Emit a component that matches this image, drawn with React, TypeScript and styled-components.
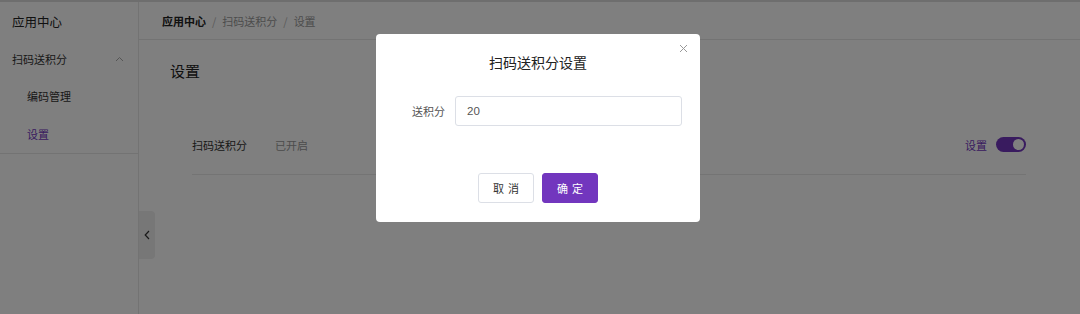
import React from "react";
import styled, { createGlobalStyle } from "styled-components";

const GlobalStyle = createGlobalStyle`
  body {
    margin: 0;
    font-family: "Noto Sans CJK SC", "Noto Sans", sans-serif;
    color: #333;
    background: #fff;
  }
`;

const purple = "#7236be";

const Page = styled.div`
  display: flex;
  height: 314px;
  box-sizing: border-box;
  border-top: 2px solid #dcdcdc;
  overflow: hidden;
`;

const Sidebar = styled.div`
  position: relative;
  width: 138px;
  flex-shrink: 0;
  border-right: 1px solid #e6e6e6;
`;

const SideTitle = styled.div`
  height: 38px;
  display: flex;
  align-items: center;
  padding-left: 12px;
  font-size: 12.5px;
  color: #222;
`;

const Menu = styled.div`
  border-bottom: 1px solid #e6e6e6;
`;

const MenuItem = styled.div<{ $sub?: boolean; $active?: boolean }>`
  height: 37.5px;
  display: flex;
  align-items: center;
  justify-content: space-between;
  padding-left: ${(p) => (p.$sub ? "27px" : "12px")};
  padding-right: 14px;
  font-size: 11px;
  color: ${(p) => (p.$active ? purple : "#333")};
`;

const CollapseTab = styled.div`
  position: absolute;
  right: -17px;
  top: 209px;
  width: 16px;
  height: 48px;
  background: #eeeeee;
  border-radius: 0 4px 4px 0;
  display: flex;
  align-items: center;
  justify-content: center;
`;

const Main = styled.div`
  flex: 1;
  display: flex;
  flex-direction: column;
`;

const Breadcrumb = styled.div`
  height: 37px;
  border-bottom: 1px solid #e6e6e6;
  display: flex;
  align-items: center;
  padding-left: 23px;
  font-size: 11px;
  color: #8a8a8a;
  gap: 6px;
`;

const Crumb = styled.span<{ $strong?: boolean }>`
  color: ${(p) => (p.$strong ? "#222" : "#999")};
  font-weight: ${(p) => (p.$strong ? 700 : 400)};
`;

const Sep = styled.span`
  color: #b5b5b5;
`;

const Content = styled.div`
  padding: 20px 54px 0 31px;
`;

const PageTitle = styled.div`
  font-size: 15px;
  color: #222;
  height: 22px;
  line-height: 22px;
`;

const SettingRow = styled.div`
  margin: 33px 0 0 22px;
  height: 60px;
  box-sizing: border-box;
  border-bottom: 1px solid #e8e8e8;
  display: flex;
  align-items: center;
  font-size: 11px;
`;

const RowLabel = styled.span`
  width: 83px;
  color: #333;
`;

const RowStatus = styled.span`
  color: #999;
  flex: 1;
`;

const RowAction = styled.span`
  display: flex;
  align-items: center;
  gap: 9px;
  color: ${purple};
`;

const Switch = styled.span`
  width: 30px;
  height: 15px;
  border-radius: 8px;
  background: ${purple};
  display: flex;
  align-items: center;
  justify-content: flex-end;
  padding: 0 2px;
  box-sizing: border-box;
`;

const Knob = styled.span`
  width: 11px;
  height: 11px;
  border-radius: 50%;
  background: #fff;
`;

const Mask = styled.div`
  position: fixed;
  inset: 0;
  background: rgba(0, 0, 0, 0.5);
  display: flex;
  justify-content: center;
  align-items: flex-start;
  padding: 34px 4px 0 0;
`;

const Modal = styled.div`
  position: relative;
  width: 324px;
  height: 188px;
  background: #fff;
  border-radius: 4px;
  box-sizing: border-box;
  display: flex;
  flex-direction: column;
`;

const ModalTitle = styled.div`
  text-align: center;
  font-size: 14px;
  color: #222;
  margin-top: 17px;
  height: 22px;
  line-height: 22px;
`;

const Close = styled.div`
  position: absolute;
  top: 8px;
  right: 11px;
  width: 12px;
  height: 12px;
  display: flex;
  align-items: center;
  justify-content: center;
`;

const FormRow = styled.div`
  display: flex;
  align-items: center;
  margin-top: 23px;
  padding-right: 18px;
`;

const Label = styled.label`
  width: 69px;
  text-align: right;
  font-size: 11px;
  color: #555;
  margin-right: 10px;
`;

const Input = styled.div`
  flex: 1;
  height: 30px;
  box-sizing: border-box;
  border: 1px solid #dcdfe6;
  border-radius: 3px;
  display: flex;
  align-items: center;
  padding-left: 11px;
  font-family: "Liberation Sans", sans-serif;
  font-size: 11.5px;
  color: #555;
`;

const Footer = styled.div`
  display: flex;
  justify-content: center;
  gap: 8px;
  margin-top: 47px;
`;

const Button = styled.button<{ $primary?: boolean }>`
  width: 56px;
  height: 30px;
  box-sizing: border-box;
  border-radius: 3px;
  border: 1px solid ${(p) => (p.$primary ? purple : "#dcdfe6")};
  background: ${(p) => (p.$primary ? purple : "#fff")};
  color: ${(p) => (p.$primary ? "#fff" : "#333")};
  font-family: "Noto Sans CJK SC", sans-serif;
  font-size: 11px;
  letter-spacing: 4px;
  padding: 0 0 0 4px;
`;

export default function App() {
  return (
    <>
      <GlobalStyle />
      <Page>
        <Sidebar>
          <SideTitle>应用中心</SideTitle>
          <Menu>
            <MenuItem>
              扫码送积分
              <svg width="9" height="6" viewBox="0 0 9 6">
                <path d="M1 5 L4.5 1.5 L8 5" fill="none" stroke="#aaa" strokeWidth="1" />
              </svg>
            </MenuItem>
            <MenuItem $sub>编码管理</MenuItem>
            <MenuItem $sub $active>设置</MenuItem>
          </Menu>
          <CollapseTab>
            <svg width="6" height="10" viewBox="0 0 6 10">
              <path d="M5 1 L1.2 5 L5 9" fill="none" stroke="#333" strokeWidth="1.2" />
            </svg>
          </CollapseTab>
        </Sidebar>
        <Main>
          <Breadcrumb>
            <Crumb $strong>应用中心</Crumb>
            <Sep>/</Sep>
            <Crumb>扫码送积分</Crumb>
            <Sep>/</Sep>
            <Crumb>设置</Crumb>
          </Breadcrumb>
          <Content>
            <PageTitle>设置</PageTitle>
            <SettingRow>
              <RowLabel>扫码送积分</RowLabel>
              <RowStatus>已开启</RowStatus>
              <RowAction>
                设置
                <Switch>
                  <Knob />
                </Switch>
              </RowAction>
            </SettingRow>
          </Content>
        </Main>
      </Page>
      <Mask>
        <Modal>
          <Close>
            <svg width="9" height="9" viewBox="0 0 9 9">
              <path d="M1 1 L8 8 M8 1 L1 8" stroke="#999" strokeWidth="1" />
            </svg>
          </Close>
          <ModalTitle>扫码送积分设置</ModalTitle>
          <FormRow>
            <Label>送积分</Label>
            <Input>20</Input>
          </FormRow>
          <Footer>
            <Button>取消</Button>
            <Button $primary>确定</Button>
          </Footer>
        </Modal>
      </Mask>
    </>
  );
}
